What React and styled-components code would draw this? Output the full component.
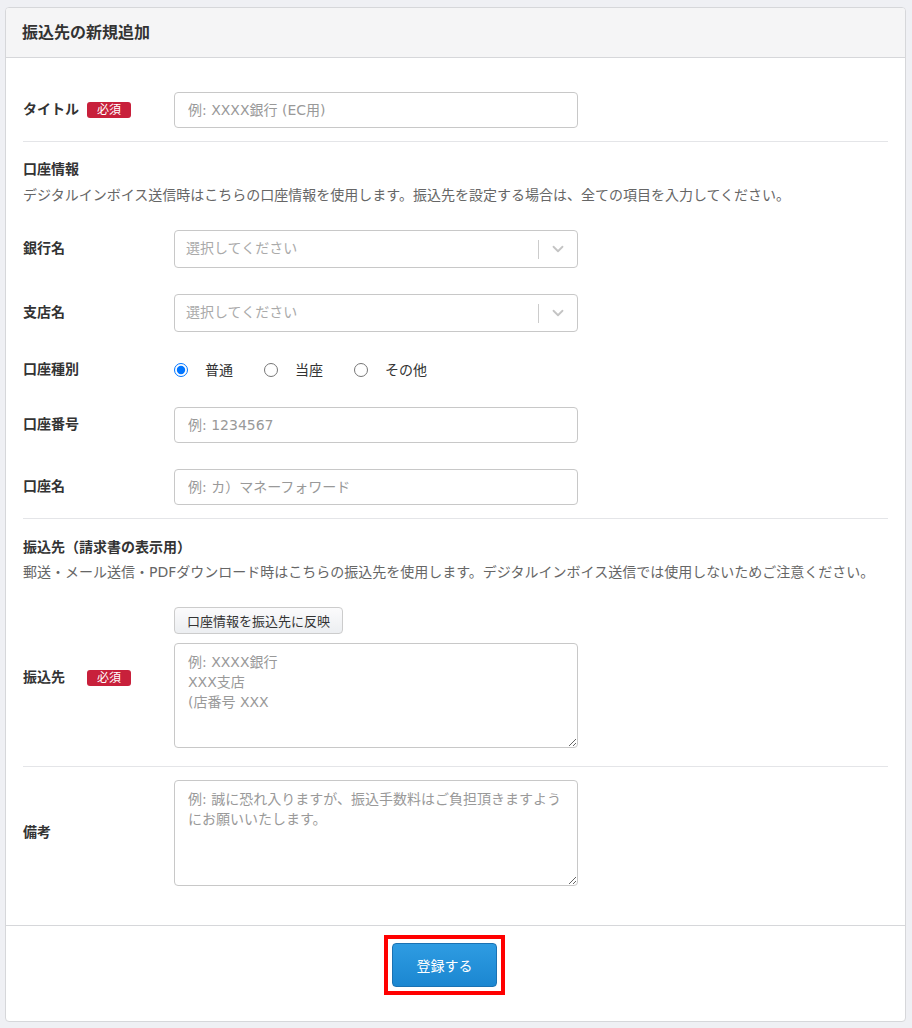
import styled, { createGlobalStyle } from "styled-components"
import { ChevronDown } from "lucide-react"

const GlobalStyle = createGlobalStyle`
  * { box-sizing: border-box; }
  body {
    margin: 0;
    background: #eff0f4;
    font-family: "DejaVu Sans", "Noto Sans CJK JP", sans-serif;
    color: #333;
  }
`

const Page = styled.div`
  padding: 7px 6px 6px 5px;
`

const Card = styled.div`
  background: #fff;
  border: 1px solid #d6d7da;
  border-radius: 4px;
  overflow: hidden;
`

const Header = styled.div`
  height: 50px;
  display: flex;
  align-items: center;
  padding: 0 16px 3px;
  background: #f5f5f6;
  border-bottom: 1px solid #d6d7da;
  font-size: 16px;
  font-weight: 700;
  color: #333;
`

const Body = styled.div`
  padding: 34px 17px 39px;
`

const Row = styled.div`
  display: grid;
  grid-template-columns: 151px 404px;
  align-items: center;
  margin-top: ${(p) => p.$mt || 0}px;
`

const Label = styled.div`
  display: flex;
  align-items: center;
  font-size: 14px;
  font-weight: 700;
  line-height: 16px;
  padding-bottom: 2px;
`

const LabelText = styled.span`
  min-width: ${(p) => (p.$badge ? "64px" : "0")};
`

const Badge = styled.span`
  display: inline-flex;
  align-items: center;
  justify-content: center;
  width: 44px;
  height: 16px;
  margin-top: 1px;
  margin-bottom: -1px;
  border-radius: 3px;
  background: #c8203b;
  color: #fff;
  font-size: 12px;
  font-weight: 400;
`

const Divider = styled.hr`
  border: 0;
  border-top: 1px solid #e4e5e8;
  margin: ${(p) => p.$mt}px 0 0;
`

const SectionTitle = styled.div`
  font-size: 14px;
  font-weight: 700;
  line-height: 20px;
  margin-top: ${(p) => p.$mt}px;
`

const SectionNote = styled.p`
  margin: ${(p) => p.$mt}px 0 0;
  font-size: 14px;
  line-height: 20px;
  color: #666;
`

const Input = styled.input`
  width: 404px;
  height: 36px;
  border: 1px solid #c8c8c8;
  border-radius: 4px;
  padding: 0 13px;
  font: inherit;
  font-size: 14px;
  color: #333;
  outline: none;
  &::placeholder { color: #999; }
`

const Select = styled.div`
  width: 404px;
  height: 38px;
  border: 1px solid #c8c8c8;
  border-radius: 4px;
  display: flex;
  align-items: center;
`

const SelectValue = styled.span`
  flex: 1;
  padding: 0 0 3px 11px;
  font-size: 14px;
  line-height: 18px;
  color: #aaa;
`

const SelectSep = styled.span`
  width: 1px;
  height: 19px;
  background: #ccc;
`

const SelectArrow = styled.span`
  width: 38px;
  display: flex;
  justify-content: center;
  color: #c4c4c4;
`

const RadioGroup = styled.div`
  display: flex;
  align-items: center;
  gap: 31px;
  height: 20px;
`

const RadioItem = styled.label`
  display: flex;
  align-items: center;
  gap: 17px;
  font-size: 14px;
  line-height: 20px;
  color: #333;
`

const Radio = styled.input`
  width: 14px;
  height: 14px;
  margin: 0;
`

const FieldColumn = styled.div`
  display: flex;
  flex-direction: column;
  align-items: flex-start;
  gap: 9px;
`

const SubButton = styled.button`
  height: 27px;
  padding: 0 12px;
  border: 1px solid #ccc;
  border-radius: 4px;
  background: linear-gradient(#fbfbfc, #eceef1);
  font: inherit;
  font-size: 13px;
  color: #333;
`

const TextArea = styled.textarea`
  width: 404px;
  height: ${(p) => p.$h}px;
  border: 1px solid #c8c8c8;
  border-radius: 4px;
  padding: 8px 13px;
  font: inherit;
  font-size: 14px;
  line-height: 20px;
  color: #333;
  outline: none;
  &::placeholder { color: #999; }
`

const Footer = styled.div`
  border-top: 1px solid #d6d7da;
  display: flex;
  justify-content: center;
  padding: 9px 22px 26px 0;
`

const Highlight = styled.div`
  border: 4px solid #f00;
  padding: 4px;
`

const SubmitButton = styled.button`
  width: 105px;
  height: 44px;
  border: 1px solid #1a72b3;
  border-radius: 4px;
  background: linear-gradient(#2e9ce2, #1b87d1);
  color: #fff;
  font: inherit;
  font-size: 14px;
`

const SelectBox = ({ placeholder }) => (
  <Select>
    <SelectValue>{placeholder}</SelectValue>
    <SelectSep />
    <SelectArrow>
      <ChevronDown size={18} strokeWidth={2.4} />
    </SelectArrow>
  </Select>
)

const accountTypes = ["普通", "当座", "その他"]

const App = () => {
  return (
    <Page>
      <GlobalStyle />
      <Card>
        <Header>振込先の新規追加</Header>
        <Body>
          <Row>
            <Label>
              <LabelText $badge>タイトル</LabelText>
              <Badge>必須</Badge>
            </Label>
            <Input placeholder="例: XXXX銀行 (EC用)" />
          </Row>
          <Divider $mt={13} />

          <SectionTitle $mt={17}>口座情報</SectionTitle>
          <SectionNote $mt={6}>
            デジタルインボイス送信時はこちらの口座情報を使用します。振込先を設定する場合は、全ての項目を入力してください。
          </SectionNote>

          <Row $mt={25}>
            <Label>銀行名</Label>
            <SelectBox placeholder="選択してください" />
          </Row>
          <Row $mt={26}>
            <Label>支店名</Label>
            <SelectBox placeholder="選択してください" />
          </Row>
          <Row $mt={28}>
            <Label>口座種別</Label>
            <RadioGroup>
              {accountTypes.map((t, i) => (
                <RadioItem key={t}>
                  <Radio type="radio" name="type" defaultChecked={i === 0} />
                  {t}
                </RadioItem>
              ))}
            </RadioGroup>
          </Row>
          <Row $mt={27}>
            <Label>口座番号</Label>
            <Input placeholder="例: 1234567" />
          </Row>
          <Row $mt={26}>
            <Label>口座名</Label>
            <Input placeholder="例: カ）マネーフォワード" />
          </Row>
          <Divider $mt={13} />

          <SectionTitle $mt={18}>振込先（請求書の表示用）</SectionTitle>
          <SectionNote $mt={5}>
            郵送・メール送信・PDFダウンロード時はこちらの振込先を使用します。デジタルインボイス送信では使用しないためご注意ください。
          </SectionNote>

          <Row $mt={25}>
            <Label>
              <LabelText $badge>振込先</LabelText>
              <Badge>必須</Badge>
            </Label>
            <FieldColumn>
              <SubButton type="button">口座情報を振込先に反映</SubButton>
              <TextArea $h={105} placeholder={"例: XXXX銀行\nXXX支店\n(店番号 XXX"} />
            </FieldColumn>
          </Row>
          <Divider $mt={18} />

          <Row $mt={13}>
            <Label>備考</Label>
            <TextArea
              $h={106}
              placeholder="例: 誠に恐れ入りますが、振込手数料はご負担頂きますようにお願いいたします。"
            />
          </Row>
        </Body>
        <Footer>
          <Highlight>
            <SubmitButton type="button">登録する</SubmitButton>
          </Highlight>
        </Footer>
      </Card>
    </Page>
  )
}

export default App
